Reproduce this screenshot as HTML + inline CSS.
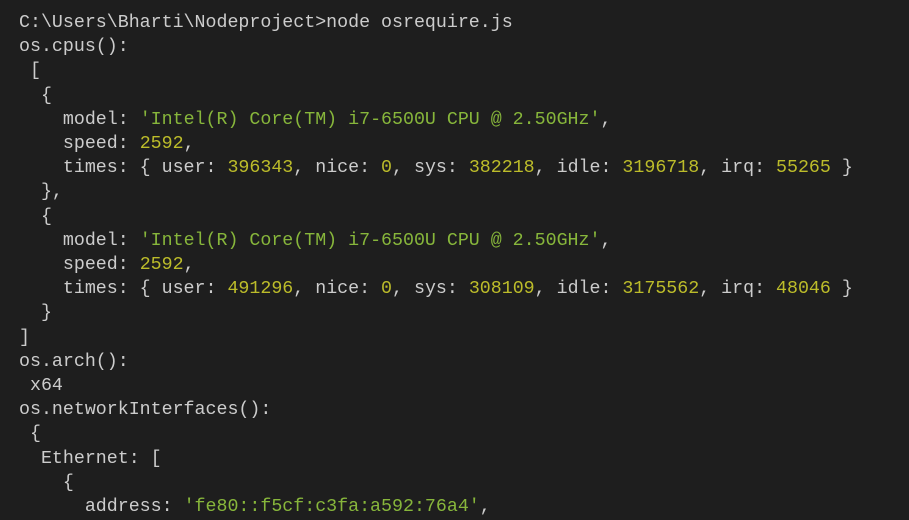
<!DOCTYPE html>
<html><head><meta charset="utf-8"><style>
html,body{margin:0;padding:0;background:#1e1e1e;width:909px;height:520px;overflow:hidden}
pre{margin:0;padding:11px 0 0 19px;font-family:"Liberation Mono",monospace;font-size:18.3px;line-height:24.2px;color:#cccccc;white-space:pre}
.g{color:#87b63b}.y{color:#bcbc2a}
</style></head><body><pre>C:\Users\Bharti\Nodeproject&gt;node osrequire.js
os.cpus():
 [
  {
    model: <span class="g">'Intel(R) Core(TM) i7-6500U CPU @ 2.50GHz'</span>,
    speed: <span class="y">2592</span>,
    times: { user: <span class="y">396343</span>, nice: <span class="y">0</span>, sys: <span class="y">382218</span>, idle: <span class="y">3196718</span>, irq: <span class="y">55265</span> }
  },
  {
    model: <span class="g">'Intel(R) Core(TM) i7-6500U CPU @ 2.50GHz'</span>,
    speed: <span class="y">2592</span>,
    times: { user: <span class="y">491296</span>, nice: <span class="y">0</span>, sys: <span class="y">308109</span>, idle: <span class="y">3175562</span>, irq: <span class="y">48046</span> }
  }
]
os.arch():
 x64
os.networkInterfaces():
 {
  Ethernet: [
    {
      address: <span class="g">'fe80::f5cf:c3fa:a592:76a4'</span>,
</pre></body></html>
